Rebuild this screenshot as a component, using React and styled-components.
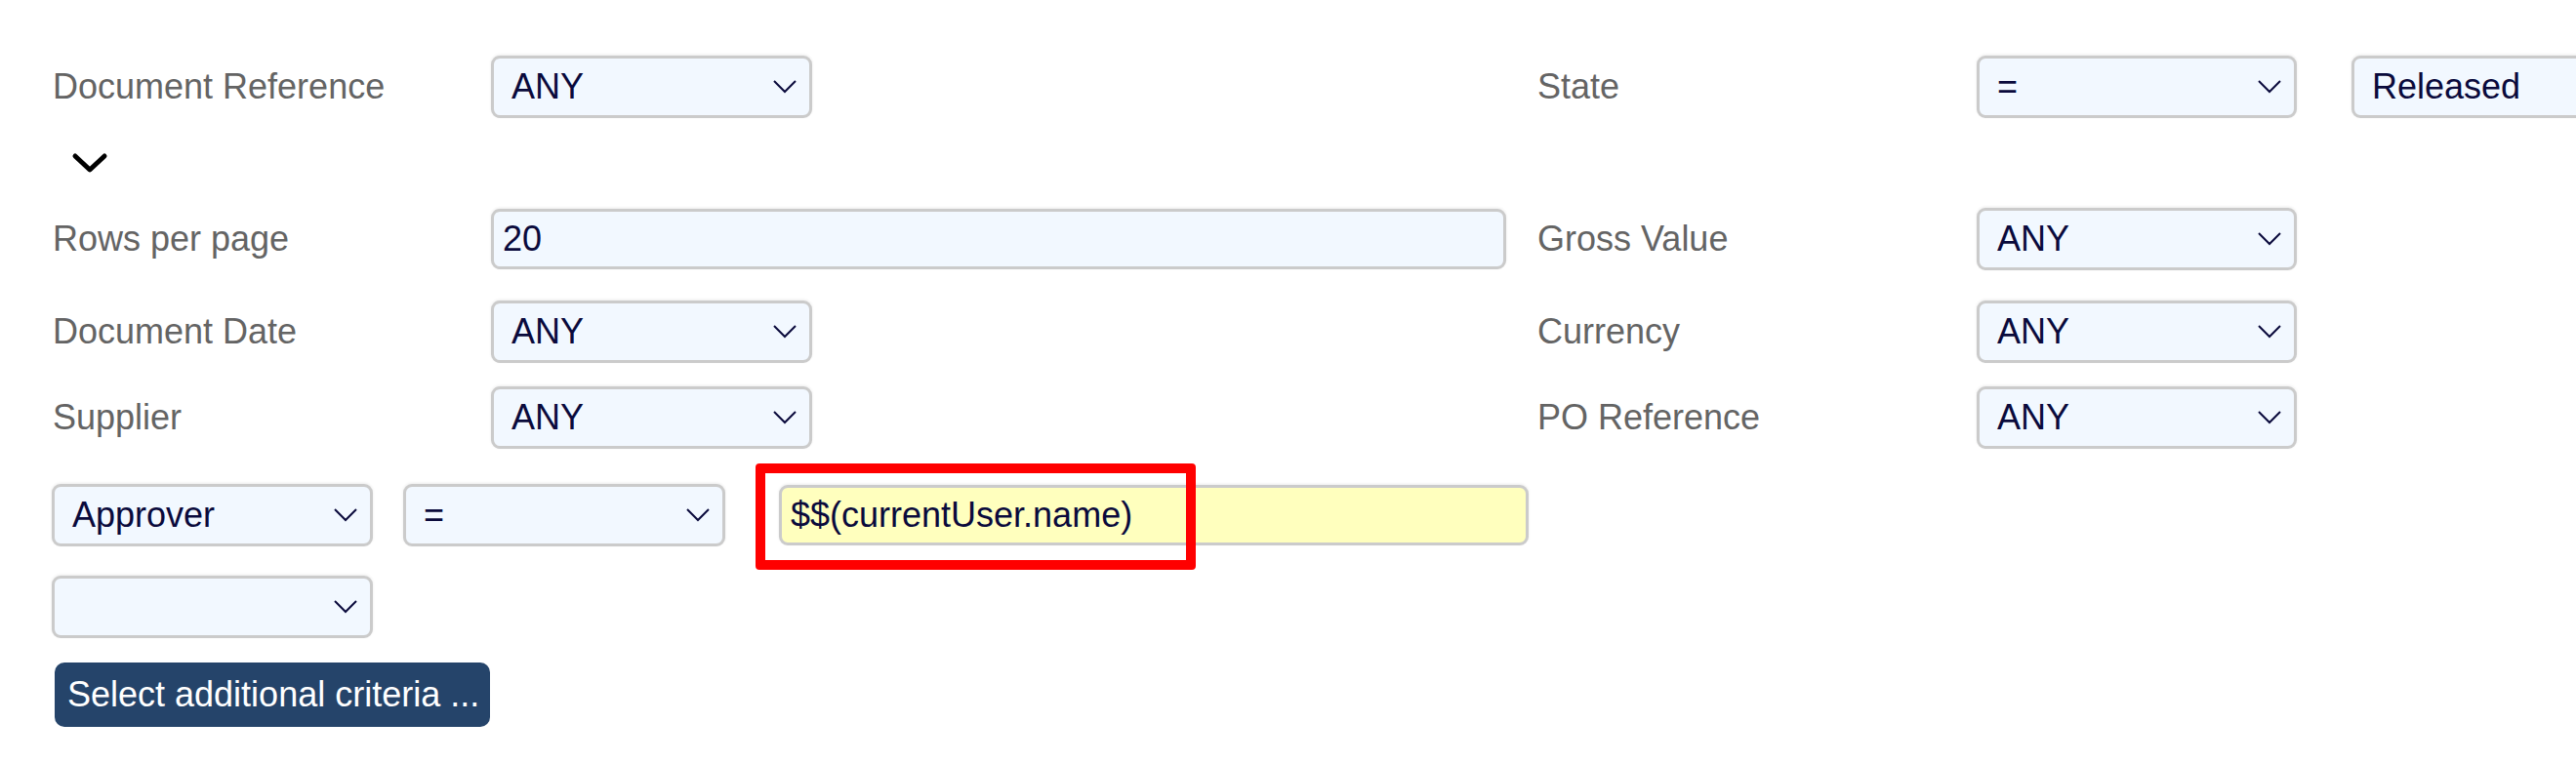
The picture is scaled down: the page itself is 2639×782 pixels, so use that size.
import React from 'react';
import styled, { createGlobalStyle } from 'styled-components';

const GlobalStyle = createGlobalStyle`
  html, body {
    margin: 0;
    padding: 0;
    background: #ffffff;
    overflow: hidden;
  }
  body {
    font-family: 'Liberation Sans', Arial, sans-serif;
  }
`;

const Page = styled.div`
  width: 2639px;
  height: 782px;
  padding: 57px 0 0 54px;
  box-sizing: border-box;
  font-size: 36px;
  overflow: hidden;
`;

const FieldRow = styled.div`
  display: grid;
  grid-template-columns: 449px 1072px 450px 1fr;
  align-items: center;
  margin-top: ${(p) => p.$gap || 0}px;
`;

const Label = styled.div`
  color: #646464;
  white-space: nowrap;
`;

const Cell = styled.div`
  display: flex;
  align-items: center;
  gap: 56px;
`;

const SelectBox = styled.div`
  display: flex;
  align-items: center;
  justify-content: space-between;
  box-sizing: border-box;
  width: ${(p) => p.$width || 329}px;
  height: 64px;
  padding: 0 13px 0 18px;
  flex-shrink: 0;
  background: #f2f8ff;
  border: 3px solid #cbcbcb;
  border-radius: 9px;
  box-shadow: 0 -1px 3px rgba(0, 0, 0, 0.08);
  color: #0a0a3c;
  white-space: nowrap;
`;

const TextInput = styled.div`
  display: flex;
  align-items: center;
  box-sizing: border-box;
  width: ${(p) => p.$width}px;
  height: 62px;
  padding: 0 9px;
  flex-shrink: 0;
  background: ${(p) => (p.$highlight ? '#ffffbe' : '#f2f8ff')};
  border: 3px solid #cbcbcb;
  border-radius: 9px;
  box-shadow: 0 -1px 3px rgba(0, 0, 0, 0.08);
  color: #0a0a3c;
  white-space: nowrap;
`;

const ToggleRow = styled.div`
  height: 92px;
  display: flex;
  align-items: center;
  padding-left: 19px;
`;

const CriteriaRow = styled.div`
  display: flex;
  align-items: center;
  margin: ${(p) => p.$gap || 0}px 0 0 -1px;
  gap: ${(p) => p.$spacing || 31}px;
`;

const Highlighted = styled.div`
  position: relative;
  margin-left: 24px;
`;

const RedFrame = styled.div`
  position: absolute;
  left: -24px;
  top: -22px;
  width: 451px;
  height: 109px;
  box-sizing: border-box;
  border: 10px solid #ff0000;
  border-radius: 4px;
  pointer-events: none;
`;

const AddButton = styled.button`
  margin: 25px 0 0 2px;
  height: 66px;
  width: 446px;
  padding: 0 0 0 13px;
  text-align: left;
  font-family: 'Liberation Sans', Arial, sans-serif;
  font-size: 36px;
  color: #ffffff;
  background: #25446a;
  border: none;
  border-radius: 10px;
  white-space: nowrap;
`;

const Chevron = () => (
  <svg width="24" height="14" viewBox="0 0 24 14">
    <polyline points="1,1 12,12 23,1" fill="none" stroke="#0a0a3c" strokeWidth="2" />
  </svg>
);

const BigChevron = () => (
  <svg width="38" height="22" viewBox="0 0 38 22">
    <polyline
      points="4,4 19,18 34,4"
      fill="none"
      stroke="#000000"
      strokeWidth="5"
      strokeLinecap="round"
      strokeLinejoin="round"
    />
  </svg>
);

const Select = ({ value, width }) => (
  <SelectBox $width={width}>
    <span>{value}</span>
    <Chevron />
  </SelectBox>
);

const rows = [
  { left: 'Rows per page', right: 'Gross Value', gap: 0, input: '20' },
  { left: 'Document Date', right: 'Currency', gap: 31 },
  { left: 'Supplier', right: 'PO Reference', gap: 24 },
];

export default function App() {
  return (
    <>
      <GlobalStyle />
      <Page>
        <FieldRow>
          <Label>Document Reference</Label>
          <Cell>
            <Select value="ANY" />
          </Cell>
          <Label>State</Label>
          <Cell>
            <Select value="=" width={328} />
            <SelectBox $width={340}>
              <span>Released</span>
            </SelectBox>
          </Cell>
        </FieldRow>

        <ToggleRow>
          <BigChevron />
        </ToggleRow>

        {rows.map((row) => (
          <FieldRow key={row.left} $gap={row.gap}>
            <Label>{row.left}</Label>
            <Cell>
              {row.input ? (
                <TextInput $width={1040}>{row.input}</TextInput>
              ) : (
                <Select value="ANY" />
              )}
            </Cell>
            <Label>{row.right}</Label>
            <Cell>
              <Select value="ANY" width={328} />
            </Cell>
          </FieldRow>
        ))}

        <CriteriaRow $gap={36}>
          <Select value="Approver" />
          <Select value="=" width={330} />
          <Highlighted>
            <TextInput $width={768} $highlight>
              $$(currentUser.name)
            </TextInput>
            <RedFrame />
          </Highlighted>
        </CriteriaRow>

        <CriteriaRow $gap={30}>
          <Select value="" />
        </CriteriaRow>

        <AddButton>Select additional criteria ...</AddButton>
      </Page>
    </>
  );
}
